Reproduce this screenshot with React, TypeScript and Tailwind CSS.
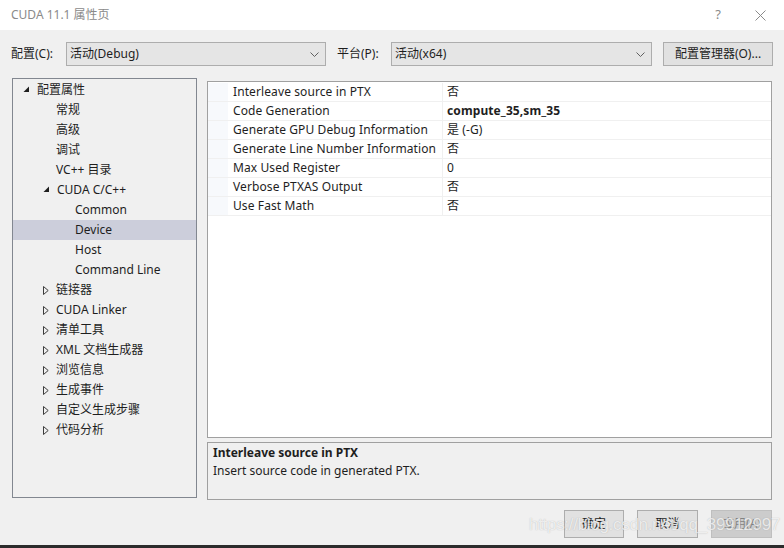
import React from "react";

const Expanded = () => (
  <svg width="7" height="7" viewBox="0 0 7 7" className="shrink-0">
    <polygon points="6,0.5 6,6 0.5,6" fill="#1e1e1e" />
  </svg>
);

const Collapsed = () => (
  <svg width="6" height="9" viewBox="0 0 6 9" className="shrink-0">
    <polygon points="0.5,0.5 5.2,4.5 0.5,8.5" fill="none" stroke="#3c3c3c" strokeWidth="1" />
  </svg>
);

const Chevron = () => (
  <svg width="9" height="5" viewBox="0 0 9 5">
    <polyline points="0.5,0.5 4.5,4.5 8.5,0.5" fill="none" stroke="#606060" strokeWidth="1" />
  </svg>
);

type TreeItem = { label: string; indent: number; icon?: "exp" | "col"; selected?: boolean };

const tree: TreeItem[] = [
  { label: "配置属性", indent: 0, icon: "exp" },
  { label: "常规", indent: 1 },
  { label: "高级", indent: 1 },
  { label: "调试", indent: 1 },
  { label: "VC++ 目录", indent: 1 },
  { label: "CUDA C/C++", indent: 1, icon: "exp" },
  { label: "Common", indent: 2 },
  { label: "Device", indent: 2, selected: true },
  { label: "Host", indent: 2 },
  { label: "Command Line", indent: 2 },
  { label: "链接器", indent: 1, icon: "col" },
  { label: "CUDA Linker", indent: 1, icon: "col" },
  { label: "清单工具", indent: 1, icon: "col" },
  { label: "XML 文档生成器", indent: 1, icon: "col" },
  { label: "浏览信息", indent: 1, icon: "col" },
  { label: "生成事件", indent: 1, icon: "col" },
  { label: "自定义生成步骤", indent: 1, icon: "col" },
  { label: "代码分析", indent: 1, icon: "col" },
];

const props: { name: string; value: string; bold?: boolean }[] = [
  { name: "Interleave source in PTX", value: "否" },
  { name: "Code Generation", value: "compute_35,sm_35", bold: true },
  { name: "Generate GPU Debug Information", value: "是 (-G)" },
  { name: "Generate Line Number Information", value: "否" },
  { name: "Max Used Register", value: "0" },
  { name: "Verbose PTXAS Output", value: "否" },
  { name: "Use Fast Math", value: "否" },
];

const textPad = ["pl-[24px]", "pl-[43px]", "pl-[62px]"];
const iconPad = ["pl-[10px]", "pl-[30px]", "pl-[49px]"];

export default function App() {
  return (
    <div
      className="relative w-[784px] h-[548px] bg-[#f0f0f0] flex flex-col overflow-hidden text-[12px] text-[#1e1e1e]"
      style={{ fontFamily: '"Noto Sans", "Noto Sans CJK SC", sans-serif' }}
    >
      {/* title bar */}
      <div className="h-[30px] bg-white flex items-center pl-[11px] shrink-0">
        <span className="text-[#8a8a8a] text-[12px]">CUDA 11.1 属性页</span>
        <span className="ml-auto text-[#8a8a8a] text-[13px] w-[14px] mr-[30px] text-center">?</span>
        <svg width="11" height="11" viewBox="0 0 11 11" className="mr-[18px]">
          <path d="M0.5 0.5 L10.5 10.5 M10.5 0.5 L0.5 10.5" stroke="#8a8a8a" strokeWidth="1" />
        </svg>
      </div>

      {/* config row */}
      <div className="flex items-center h-[24px] mt-[12px] pl-[11px] shrink-0">
        <span className="w-[55px]">配置(C):</span>
        <div className="w-[260px] h-[24px] bg-[#e5e5e5] border border-[#adadad] flex items-center pl-[3px] pr-[6px]">
          <span>活动(Debug)</span>
          <span className="ml-auto"><Chevron /></span>
        </div>
        <span className="ml-[11px] w-[54px]">平台(P):</span>
        <div className="w-[261px] h-[24px] bg-[#e5e5e5] border border-[#adadad] flex items-center pl-[3px] pr-[6px]">
          <span>活动(x64)</span>
          <span className="ml-auto"><Chevron /></span>
        </div>
        <div className="ml-[11px] w-[110px] h-[24px] bg-[#e1e1e1] border border-[#adadad] flex items-center justify-center">
          配置管理器(O)...
        </div>
      </div>

      {/* main */}
      <div className="flex mt-[12px] pl-[12px] shrink-0">
        {/* tree */}
        <div className="w-[185px] h-[420px] bg-[#f0f0f0] border border-[#828790] pt-[1px]">
          {tree.map((t, i) => (
            <div
              key={i}
              className={`h-[20px] flex items-center ${t.icon ? iconPad[t.indent] : textPad[t.indent]} ${
                t.selected ? "bg-[#cccedb]" : ""
              }`}
            >
              {t.icon === "exp" && (
                <span className="w-[14px] flex items-center mt-[-1px]"><Expanded /></span>
              )}
              {t.icon === "col" && (
                <span className="w-[13px] flex items-center"><Collapsed /></span>
              )}
              <span>{t.label}</span>
            </div>
          ))}
        </div>

        {/* right column */}
        <div className="ml-[10px] w-[565px] flex flex-col">
          <div className="mt-[3px] h-[357px] bg-white border border-[#a0a0a0] flex flex-col pt-[1px]">
            {props.map((p, i) => (
              <div key={i} className="h-[19px] flex border-b border-[#f0f0f0] tracking-[0.1px]">
                <div className="w-[20px] bg-[#f7f9fc]" />
                <div className="w-[215px] pl-[5px] flex items-center border-r border-[#f0f0f0]">
                  {p.name}
                </div>
                <div className={`flex-1 pl-[4px] flex items-center ${p.bold ? "font-bold" : ""}`}>{p.value}</div>
              </div>
            ))}
            <div className="flex-1 bg-white" />
          </div>
          <div className="mt-[4px] h-[58px] border border-[#a0a0a0] bg-[#f0f0f0] pl-[5px] pt-[1px]">
            <div className="font-bold leading-[18px]">Interleave source in PTX</div>
            <div className="leading-[18px]">Insert source code in generated PTX.</div>
          </div>
        </div>
      </div>

      {/* buttons */}
      <div className="flex justify-end mt-[10px] pr-[12px] gap-[13px] shrink-0">
        <div className="w-[60px] h-[28px] bg-[#e1e1e1] border border-[#adadad] flex items-center justify-center">确定</div>
        <div className="w-[61px] h-[28px] bg-[#e1e1e1] border border-[#adadad] flex items-center justify-center">取消</div>
        <div className="w-[61px] h-[28px] bg-[#cccccc] border border-[#bfbfbf] flex items-center justify-center text-[#838383]">应用(A)</div>
      </div>

      <div className="mt-auto h-[3px] bg-[#2b2b2b]" />

      {/* watermark */}
      <div
        className="absolute left-[529px] top-[512px] text-[17px] text-white/75 tracking-[-0.3px]"
        style={{ fontFamily: '"Liberation Sans", sans-serif', textShadow: "0 0 1px rgba(120,120,120,0.5)" }}
      >
        https://blog.csdn.net/qq_39912997
      </div>
    </div>
  );
}
